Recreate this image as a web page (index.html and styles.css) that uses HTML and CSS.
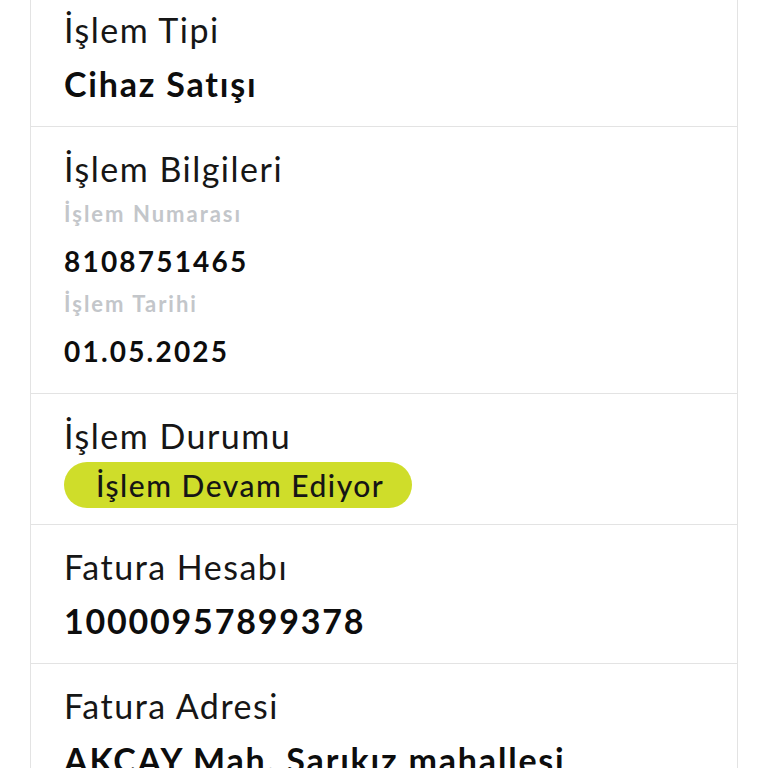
FILE: index.html
```html
<!DOCTYPE html>
<html lang="tr">
<head>
<meta charset="utf-8">
<link rel="stylesheet" href="styles.css">
</head>
<body>
<div class="card">
  <section class="row">
    <div class="label">İşlem Tipi</div>
    <div class="value">Cihaz Satışı</div>
  </section>
  <section class="row row-info">
    <div class="label">İşlem Bilgileri</div>
    <div class="sublabel">İşlem Numarası</div>
    <div class="num">8108751465</div>
    <div class="sublabel">İşlem Tarihi</div>
    <div class="num">01.05.2025</div>
  </section>
  <section class="row row-status">
    <div class="label">İşlem Durumu</div>
    <div class="badge">İşlem Devam Ediyor</div>
  </section>
  <section class="row">
    <div class="label">Fatura Hesabı</div>
    <div class="value">10000957899378</div>
  </section>
  <section class="row">
    <div class="label">Fatura Adresi</div>
    <div class="value">AKÇAY Mah. Sarıkız mahallesi</div>
  </section>
</div>
</body>
</html>
```

FILE: styles.css
```css
html, body {
  margin: 0;
  padding: 0;
  background: #ffffff;
}
body {
  font-family: "Lato", "Noto Sans", sans-serif;
  color: #111111;
  overflow: hidden;
  height: 768px;
}
.card {
  margin: -12px 30px 0 30px;
  border-left: 1px solid #e3e3e3;
  border-right: 1px solid #e3e3e3;
  background: #ffffff;
  display: flex;
  flex-direction: column;
}
.row {
  padding: 22px 32px 18px 33px;
  border-bottom: 1px solid #e3e3e3;
  display: flex;
  flex-direction: column;
  align-items: flex-start;
}
.row-info {
  padding-bottom: 22px;
}
.row-status {
  padding-bottom: 16px;
}
.label {
  font-size: 34px;
  font-weight: 400;
  line-height: 40px;
  letter-spacing: 1.5px;
  color: #161616;
}
.value {
  font-size: 34px;
  font-weight: 700;
  line-height: 48px;
  letter-spacing: 1.8px;
  margin-top: 10px;
  color: #0d0d0d;
  white-space: nowrap;
}
.sublabel {
  font-size: 22px;
  font-weight: 700;
  line-height: 30px;
  letter-spacing: 2px;
  color: #c3c6ca;
  margin-top: 10px;
}
.num + .sublabel {
  margin-top: 8px;
}
.num {
  font-size: 28px;
  font-weight: 700;
  line-height: 40px;
  letter-spacing: 2.2px;
  margin-top: 12px;
  color: #0d0d0d;
}
.badge {
  margin-top: 6px;
  background: #cfdd2a;
  border-radius: 23px;
  height: 46px;
  line-height: 46px;
  padding: 0 28px 0 32px;
  font-size: 30px;
  font-weight: 500;
  letter-spacing: 1.5px;
  color: #151515;
}
```
